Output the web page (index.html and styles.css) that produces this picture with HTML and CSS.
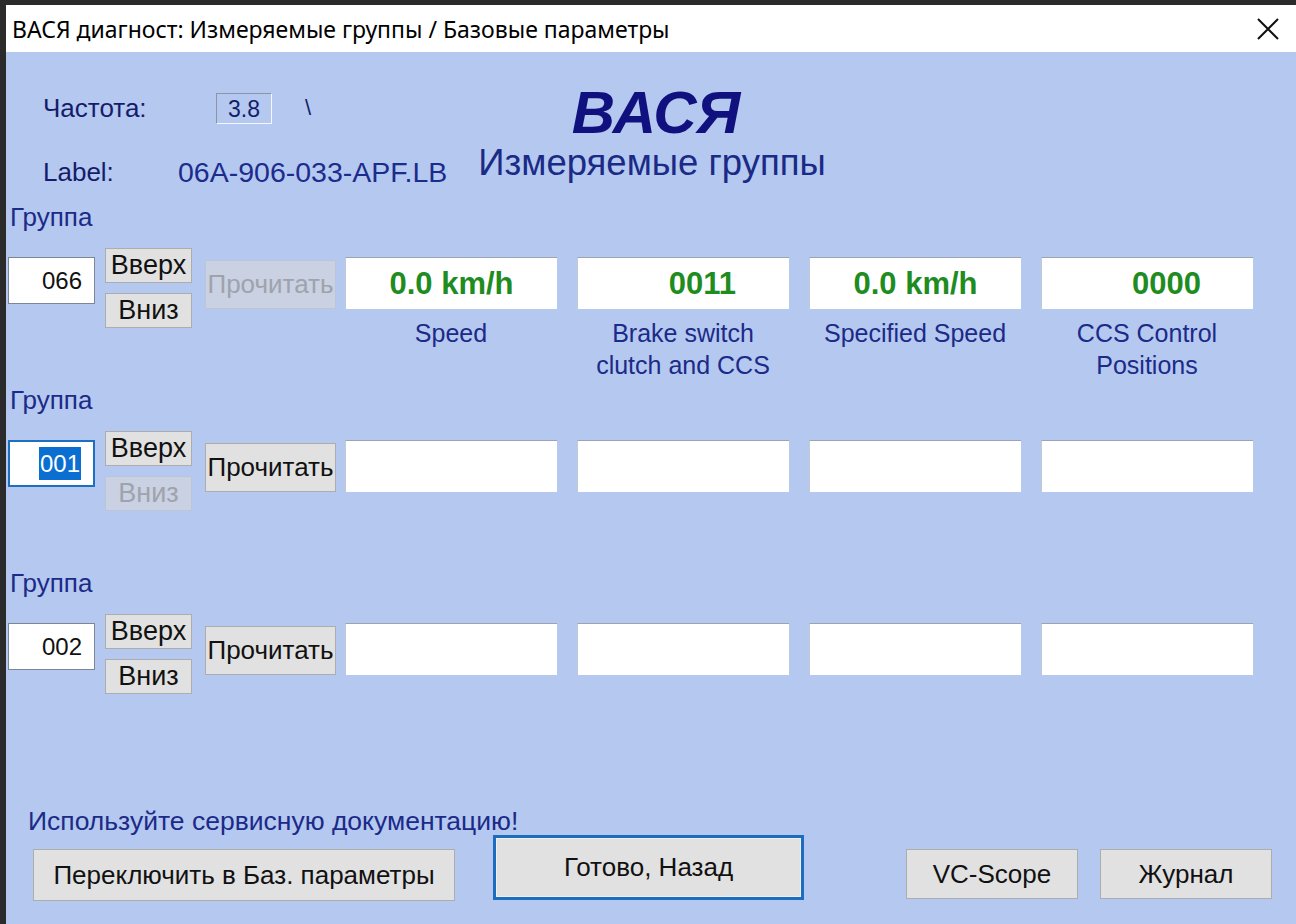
FILE: index.html
```html
<!DOCTYPE html>
<html lang="ru">
<head>
    <meta charset="UTF-8">
    <title>ВАСЯ диагност: Измеряемые группы / Базовые параметры</title>
    <link rel="stylesheet" href="styles.css">
</head>
<body>
    <div class="window">
        <div class="titlebar">
            <span class="title">ВАСЯ диагност: Измеряемые группы / Базовые параметры</span>
            <svg class="close" width="22" height="22" viewBox="0 0 22 22">
                <path d="M1 1 L21 21 M21 1 L1 21" stroke="#111" stroke-width="2" fill="none"/>
            </svg>
        </div>
        <div class="client">
            <div class="header">
                <div class="info">
                    <div class="info-row">
                        <span class="info-label freq-label">Частота:</span>
                        <span class="freq-box">3.8</span>
                        <span class="spinner">\</span>
                    </div>
                    <div class="info-row second">
                        <span class="info-label">Label:</span>
                        <span class="label-value">06A-906-033-APF.LB</span>
                    </div>
                </div>
                <div class="logo">
                    <div class="logo-name">ВАСЯ</div>
                    <div class="logo-sub">Измеряемые группы</div>
                </div>
            </div>

            <!-- группа 1 -->
            <div class="group">
                <div class="group-title">Группа</div>
                <div class="group-row">
                    <div class="group-input">066</div>
                    <div class="updown">
                        <button class="btn">Вверх</button>
                        <button class="btn">Вниз</button>
                    </div>
                    <button class="btn btn-read" disabled>Прочитать</button>
                    <div class="cell">
                        <div class="value">0.0 km/h</div>
                        <div class="caption">Speed</div>
                    </div>
                    <div class="cell">
                        <div class="value code">0011</div>
                        <div class="caption">Brake switch<br>clutch and CCS</div>
                    </div>
                    <div class="cell">
                        <div class="value">0.0 km/h</div>
                        <div class="caption">Specified Speed</div>
                    </div>
                    <div class="cell">
                        <div class="value code">0000</div>
                        <div class="caption">CCS Control<br>Positions</div>
                    </div>
                </div>
            </div>

            <!-- группа 2 -->
            <div class="group">
                <div class="group-title">Группа</div>
                <div class="group-row">
                    <div class="group-input focused"><span class="selected">001</span></div>
                    <div class="updown">
                        <button class="btn">Вверх</button>
                        <button class="btn" disabled>Вниз</button>
                    </div>
                    <button class="btn btn-read">Прочитать</button>
                    <div class="cell"><div class="value"></div></div>
                    <div class="cell"><div class="value"></div></div>
                    <div class="cell"><div class="value"></div></div>
                    <div class="cell"><div class="value"></div></div>
                </div>
            </div>

            <!-- группа 3 -->
            <div class="group">
                <div class="group-title">Группа</div>
                <div class="group-row">
                    <div class="group-input">002</div>
                    <div class="updown">
                        <button class="btn">Вверх</button>
                        <button class="btn">Вниз</button>
                    </div>
                    <button class="btn btn-read">Прочитать</button>
                    <div class="cell"><div class="value"></div></div>
                    <div class="cell"><div class="value"></div></div>
                    <div class="cell"><div class="value"></div></div>
                    <div class="cell"><div class="value"></div></div>
                </div>
            </div>

            <div class="footer">
                <div class="footer-left">
                    <div class="notice">Используйте сервисную документацию!</div>
                    <button class="btn btn-switch">Переключить в Баз. параметры</button>
                </div>
                <button class="btn btn-done">Готово, Назад</button>
                <button class="btn btn-small btn-scope">VC-Scope</button>
                <button class="btn btn-small btn-log">Журнал</button>
            </div>
        </div>
    </div>
</body>
</html>
```

FILE: styles.css
```css
body {
    margin: 0;
    background-color: #2b2b2b;
    font-family: 'Liberation Sans', Arial, sans-serif;
    overflow: hidden;
}
.window {
    margin: 5px 0 0 6px;
    height: 919px;
    display: flex;
    flex-direction: column;
}
.titlebar {
    height: 47px;
    flex-shrink: 0;
    background-color: #ffffff;
    display: flex;
    align-items: center;
    justify-content: space-between;
    padding-left: 6px;
    padding-right: 17px;
}
.titlebar .title {
    font-family: 'Noto Sans', sans-serif;
    font-size: 23px;
    color: #000;
}
.client {
    flex: 1;
    background-color: #b4c8f0;
    display: flex;
    flex-direction: column;
}
.header {
    height: 150px;
    display: flex;
}
.info {
    width: 433px;
    padding: 40px 0 0 37px;
}
.info-row {
    display: flex;
    align-items: center;
    height: 32px;
}
.info-row.second {
    margin-top: 32px;
}
.info-label {
    width: 135px;
    font-size: 26px;
    color: #151c6a;
}
.freq-label {
    width: 173px;
}
.freq-box {
    width: 54px;
    height: 29px;
    border-top: 1px solid #8c94a8;
    border-left: 1px solid #8c94a8;
    border-right: 1px solid #f4f7ff;
    border-bottom: 1px solid #f4f7ff;
    font-size: 23px;
    line-height: 31px;
    text-align: center;
    color: #151c6a;
}
.spinner {
    margin-left: 33px;
    font-size: 22px;
    color: #151c6a;
}
.label-value {
    font-size: 28.5px;
    color: #1c2c8c;
}
.logo {
    width: 352px;
    padding-top: 31px;
    text-align: center;
}
.logo-name {
    font-size: 60px;
    line-height: 60px;
    font-weight: bold;
    font-style: italic;
    color: #10107e;
    padding-left: 8px;
}
.logo-sub {
    margin-top: 1px;
    font-size: 36.5px;
    line-height: 38px;
    color: #1a2a86;
}
.group {
    height: 183px;
}
.group-title {
    padding-left: 4px;
    font-size: 26px;
    line-height: 30px;
    color: #1c2a88;
}
.group-row {
    display: flex;
    align-items: flex-start;
    margin-top: 16px;
    padding-left: 2px;
}
.group-input {
    width: 73px;
    height: 45px;
    margin-top: 9px;
    padding-right: 12px;
    background-color: #fff;
    border: 1px solid #7d8696;
    font-size: 24px;
    line-height: 45px;
    text-align: right;
    color: #111;
}
.group-input.focused {
    border: 2px solid #1d6fc2;
    width: 71px;
    height: 43px;
    line-height: 43px;
}
.selected {
    background-color: #0a6fd0;
    color: #fff;
    padding: 3px 1px;
}
.btn {
    font-family: 'Liberation Sans', Arial, sans-serif;
    font-size: 26px;
    color: #111;
    background-color: #e1e1e1;
    border: 1px solid #adadad;
    padding: 0;
    margin: 0;
}
.btn:disabled {
    background-color: #c9d1e2;
    border-color: #bcc5d8;
    color: #9ea3ad;
}
.updown {
    display: flex;
    flex-direction: column;
    gap: 10px;
    margin-left: 10px;
}
.updown .btn {
    width: 87px;
    height: 35px;
    font-size: 27px;
}
.btn-read {
    width: 131px;
    height: 49px;
    margin-top: 12px;
    margin-left: 13px;
}
.cell {
    width: 212px;
    margin-left: 20px;
    text-align: center;
}
.btn-read + .cell {
    margin-left: 9px;
}
.value {
    height: 51px;
    margin-top: 9px;
    background-color: #fff;
    border-top: 1px solid #9ca3b2;
    border-left: 1px solid #c3c9d6;
    font-size: 31px;
    line-height: 52px;
    font-weight: bold;
    color: #1f8c1f;
}
.value.code {
    padding-left: 38px;
}
.caption {
    margin-top: 8px;
    font-size: 25px;
    line-height: 32px;
    color: #1c2a88;
}
.footer {
    flex: 1;
    display: flex;
    align-items: flex-end;
    padding-bottom: 23px;
}
.footer-left {
    width: 427px;
    padding-left: 22px;
}
.notice {
    font-size: 26.5px;
    line-height: 30px;
    color: #1c2a88;
    white-space: nowrap;
}
.btn-switch {
    width: 422px;
    height: 52px;
    margin-top: 13px;
    margin-left: 5px;
}
.btn-done {
    width: 311px;
    height: 65px;
    margin-left: 38px;
    margin-bottom: 1px;
    border: 3px solid #1c6cc0;
    box-shadow: inset 0 0 0 1px #f0f0f0;
}
.btn-small {
    width: 172px;
    height: 50px;
    margin-bottom: 2px;
}
.btn-scope {
    margin-left: 102px;
}
.btn-log {
    margin-left: 22px;
}
```
